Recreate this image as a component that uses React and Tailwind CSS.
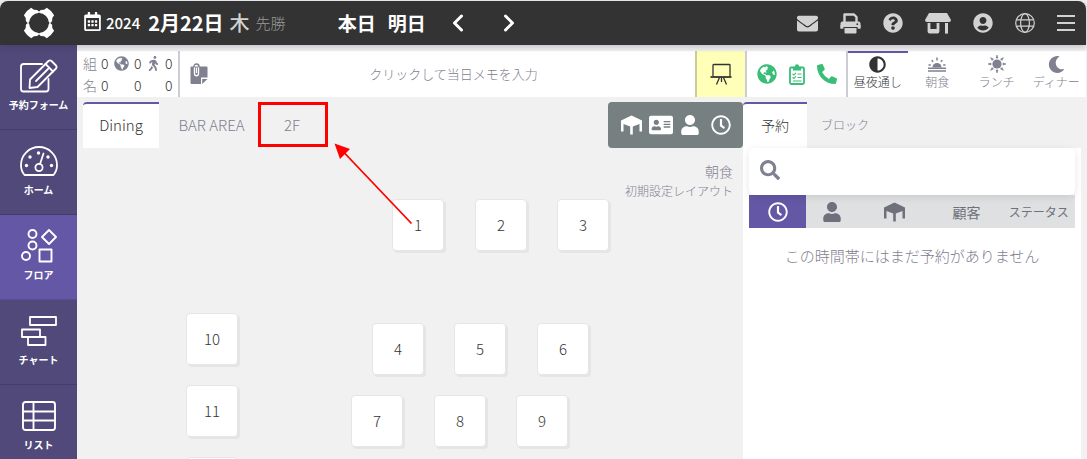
import React from "react";
import {
  FaRegCalendarAlt,
  FaEnvelope,
  FaQuestionCircle,
  FaUserCircle,
  FaGlobeAmericas,
  FaWalking,
  FaAdjust,
  FaMoon,
  FaPhoneAlt,
  FaAddressCard,
  FaUser,
  FaRegClock,
  FaSearch,
} from "react-icons/fa";

const LogoIcon = () => (
  <svg viewBox="-17 -17 34 34" className="size-[34px]" fill="#fff">
    {[45, 135, 225, 315].map((a) => (
      <path key={a} transform={`rotate(${a})`} d="M-5.200 -16.200Q0 -17.600 5.200 -16.200L5.800 -13L8 -10.500L8 -7.500L-8 -7.500L-8 -10.500L-5.800 -13Z" />
    ))}
    <circle r="9.900" fill="#333" />
  </svg>
);

const PrinterIcon = () => (
  <svg viewBox="0 0 21 21" className="size-[21px]" fill="#d2d2d2">
    <path d="M4.500 9V1.500H14L16.500 4V9" fill="none" stroke="#d2d2d2" strokeWidth="2.400" strokeLinejoin="round" />
    <path d="M2.500 8.500H18.500Q20.500 8.500 20.500 10.500V15.500H.5V10.500Q.5 8.500 2.500 8.500Z" />
    <path d="M2.800 12.800H18.200V21H2.800Z" fill="#333" />
    <path d="M.5 12H20.500V15.500H17.500V14H3.500V15.500H.5Z" />
    <path d="M4.500 15H16.500V19.500Q16.500 20.500 15.500 20.500H5.500Q4.500 20.500 4.500 19.500Z" />
    <circle cx="17.300" cy="11.200" r=".9" fill="#333" />
  </svg>
);

const StoreIcon = () => (
  <svg viewBox="0 0 26 21" className="h-[21px] w-[26px]" fill="#d2d2d2">
    <path d="M4 0H22L26 7Q26 9 24 9H2Q0 9 0 7Z" />
    <path d="M2.600 10H5.400V16H11.600V10H14.400V18.600Q14.400 20.600 12.400 20.600H4.600Q2.600 20.600 2.600 18.600Z" />
    <path d="M20 10H23V20.600H20Z" />
  </svg>
);

const GlobeIcon = () => (
  <svg viewBox="0 0 20 20" className="size-5" fill="none" stroke="#d2d2d2" strokeWidth="1.2">
    <circle cx="10" cy="10" r="9.3" />
    <ellipse cx="10" cy="10" rx="4.4" ry="9.3" />
    <path d="M1.4 6.8H18.6M1.4 13.2H18.6" />
  </svg>
);

const MenuIcon = () => (
  <svg viewBox="0 0 18 16" className="h-4 w-[18px]" stroke="#d2d2d2" strokeWidth="2">
    <path d="M0 1H18M0 8H18M0 15H18" />
  </svg>
);

const Chevron = ({ d }) => (
  <svg viewBox="0 0 12 18" className="h-[18px] w-3" fill="none" stroke="#fff" strokeWidth="3" strokeLinecap="round" strokeLinejoin="round">
    <path d={d} />
  </svg>
);

const EditIcon = () => (
  <svg viewBox="0 0 38 34" className="h-[34px] w-[38px]" fill="none" stroke="#fff" strokeWidth="1.8" strokeLinejoin="round" strokeLinecap="round">
    <path d="M22 5H3.5Q1 5 1 7.500V30Q1 32.500 3.500 32.500H26Q28.500 32.500 28.500 30V20" />
    <path d="M10 20.500L28.500 2Q30 .8 31.500 2L36 6.500Q37.200 8 36 9.500L17.500 28L9.500 29Z" />
    <path d="M25.500 5L33 12.500M28 10L16 22" />
  </svg>
);

const GaugeIcon = () => (
  <svg viewBox="0 0 38 30" className="h-[30px] w-[38px]" fill="none" stroke="#fff" strokeWidth="1.8" strokeLinejoin="round" strokeLinecap="round">
    <path d="M4.500 29Q1 25 1 19A18 18 0 0 1 37 19Q37 25 33.500 29Z" />
    <circle cx="19" cy="21.500" r="3.600" />
    <path d="M20 18L23.500 7.500" />
    <g fill="#fff" stroke="none">
      <circle cx="6.500" cy="19.500" r="1.700" />
      <circle cx="10" cy="11" r="1.700" />
      <circle cx="18.500" cy="7" r="1.700" />
      <circle cx="28" cy="11" r="1.700" />
      <circle cx="31.500" cy="19.500" r="1.700" />
    </g>
  </svg>
);

const FloorIcon = () => (
  <svg viewBox="0 0 36 34" className="h-[34px] w-9" fill="none" stroke="#fff" strokeWidth="1.9" strokeLinejoin="round">
    <circle cx="11.500" cy="5" r="4" />
    <circle cx="11.500" cy="16.500" r="4" />
    <circle cx="5" cy="27" r="4" />
    <path d="M28 1L35 8L28 15L21 8Z" />
    <rect x="18.500" y="20.500" width="12" height="12" />
  </svg>
);

const ChartIcon = () => (
  <svg viewBox="0 0 36 30" className="h-[30px] w-9" fill="none" stroke="#fff" strokeWidth="1.8" strokeLinejoin="round">
    <rect x="9" y="1" width="26" height="8" />
    <rect x="1" y="13.500" width="18" height="7.500" />
    <rect x="7" y="21" width="17.500" height="8" />
  </svg>
);

const ListIcon = () => (
  <svg viewBox="0 0 34 30" className="h-[30px] w-[34px]" fill="none" stroke="#fff" strokeWidth="1.9">
    <rect x="1" y="1" width="32" height="28" rx="2.500" />
    <path d="M1 10.500H33M1 19.500H33M11.500 1V29" />
  </svg>
);

const TableIcon = () => (
  <svg viewBox="0 0 21 20" className="h-5 w-[21px]" fill="currentColor">
    <path d="M10.500 .5L21 5.500V16.500H18.500V9L11.800 11.500V19.500H9.200V11.500L2.500 9V16.500H0V5.500Z" />
  </svg>
);

const NoteClipIcon = () => (
  <svg viewBox="0 0 18 22" className="h-[22px] w-[18px]">
    <path d="M1.500 3.500H16.500Q17.500 3.500 17.500 4.500V14.500H11V21H1.500Q.5 21 .5 20V4.500Q.5 3.500 1.500 3.500Z" fill="#7f8090" />
    <path d="M12.200 16H17.500L12.200 21Z" fill="#7f8090" />
    <path d="M4.500 4V10.500Q4.500 12.800 6.500 12.800T8.500 10.500V4" fill="none" stroke="#fff" strokeWidth="1.400" />
    <path d="M4 4.500V3.500Q4 1 6.500 1T9 3.500V4.500" fill="none" stroke="#7f8090" strokeWidth="1.400" />
    <path d="M6.500 4.500V10" stroke="#fff" strokeWidth="1" />
  </svg>
);

const EaselIcon = () => (
  <svg viewBox="0 0 22 22" className="size-[22px]" fill="none" stroke="#333" strokeWidth="1.300">
    <path d="M3 13V2.200Q3 1.500 3.700 1.500H19.300Q20 1.500 20 2.200V13" />
    <path d="M.5 14H21.500" strokeWidth="1.800" />
    <path d="M9.500 14.500L6.500 21.500M11.500 14.500V19M13.500 14.500L16.500 21.500" />
  </svg>
);

const ClipboardIcon = () => (
  <svg viewBox="0 0 16 21" className="h-[21px] w-4" fill="none" stroke="#39bd77">
    <rect x="1" y="3.500" width="14" height="16.500" rx="1.200" strokeWidth="1.800" />
    <path d="M4 2.800H12V6.500H4Z" fill="#39bd77" stroke="none" />
    <circle cx="8" cy="2.300" r="2" fill="#39bd77" stroke="none" />
    <path d="M3.500 9.800L4.800 11L7 8.800M8.500 10H12.500M3.500 13.300L4.800 14.500L7 12.300M8.500 13.500H12.500M4 17H12.500" strokeWidth="1.100" />
  </svg>
);

const SunriseIcon = () => (
  <svg viewBox="0 0 18 15" className="h-[15px] w-[18px]" fill="none" stroke="#7f8090" strokeWidth="1.500">
    <path d="M4.500 10.500A4.500 4.500 0 0 1 13.500 10.500Z" fill="#7f8090" stroke="none" />
    <path d="M0 11.200H18M0 14H18M9 .5V3.500M3.600 3.200L5.200 4.800M14.400 3.200L12.800 4.800M.5 8H2.800M15.200 8H17.500" />
  </svg>
);

const SunIcon = () => (
  <svg viewBox="-9 -9 18 18" className="size-[18px]" fill="#7f8090">
    <circle r="4.600" />
    {[0, 45, 90, 135, 180, 225, 270, 315].map((a) => (
      <path key={a} transform={`rotate(${a})`} d="M-1 -6L0 -9L1 -6Z" stroke="#7f8090" strokeWidth=".6" />
    ))}
  </svg>
);

const navItems = [
  { label: "予約フォーム", icon: <EditIcon /> },
  { label: "ホーム", icon: <GaugeIcon /> },
  { label: "フロア", icon: <FloorIcon />, active: true },
  { label: "チャート", icon: <ChartIcon /> },
  { label: "リスト", icon: <ListIcon /> },
];

const shifts = [
  { label: "昼夜通し", icon: <FaAdjust className="size-[17px]" />, active: true },
  { label: "朝食", icon: <SunriseIcon /> },
  { label: "ランチ", icon: <SunIcon /> },
  { label: "ディナー", icon: <FaMoon className="size-[17px]" /> },
];

const tables = [
  { n: 1, place: "left-[315px] top-[51px]" },
  { n: 2, place: "left-[398px] top-[51px]" },
  { n: 3, place: "left-[480px] top-[51px]" },
  { n: 4, place: "left-[295px] top-[175px]" },
  { n: 5, place: "left-[377px] top-[175px]" },
  { n: 6, place: "left-[460px] top-[175px]" },
  { n: 7, place: "left-[274px] top-[247px]" },
  { n: 8, place: "left-[357px] top-[247px]" },
  { n: 9, place: "left-[439px] top-[247px]" },
  { n: 10, place: "left-[109px] top-[165px]" },
  { n: 11, place: "left-[109px] top-[237px]" },
  { place: "left-[109px] top-[309px]" },
];

function Header() {
  return (
    <header className="relative z-10 mt-px mr-px flex h-11 shrink-0 items-center rounded-t-lg bg-[#333] pr-[11px] text-white shadow-[0_2px_6px_rgba(40,40,70,0.25)]">
      <a href="#top" aria-label="トップ" className="flex w-[77px] justify-center">
        <LogoIcon />
      </a>
      <button className="ml-1.5 flex items-center">
        <FaRegCalendarAlt className="mb-1 size-[19px]" />
        <span className="ml-1 text-[15px] font-medium">2024</span>
        <span className="ml-2 text-xl leading-6 font-bold">2月22日</span>
        <span className="ml-1.5 text-xl leading-6 font-medium text-[#d2d2d2]">木</span>
        <span className="ml-1.5 text-[15px] text-[#999]">先勝</span>
      </button>
      <button className="ml-[52px] text-[19px] leading-6 font-bold">本日</button>
      <button className="ml-3 text-[19px] leading-6 font-bold">明日</button>
      <button aria-label="前の日" className="ml-[26px]">
        <Chevron d="M9.500 2L2.500 9L9.500 16" />
      </button>
      <button aria-label="次の日" className="ml-[39px]">
        <Chevron d="M2.500 2L9.500 9L2.500 16" />
      </button>
      <div className="ml-auto flex items-center gap-[22px] text-[#d2d2d2]">
        <button aria-label="メール"><FaEnvelope className="size-[21px]" /></button>
        <button aria-label="印刷"><PrinterIcon /></button>
        <button aria-label="ヘルプ"><FaQuestionCircle className="size-5" /></button>
        <button aria-label="店舗"><StoreIcon /></button>
        <button aria-label="アカウント"><FaUserCircle className="size-5" /></button>
        <button aria-label="言語"><GlobeIcon /></button>
        <button aria-label="メニュー"><MenuIcon /></button>
      </div>
    </header>
  );
}

function Toolbar() {
  return (
    <div className="mt-1.5 mr-px flex h-[46px] shrink-0 bg-white">
      <div className="grid w-[103px] shrink-0 grid-cols-[14px_9px_16px_9px_14px_9px] content-center items-center gap-x-1 border-r-2 border-[#ccccd4] pl-1.5 text-sm leading-[22px] text-[#333]">
        <span className="text-[#7f8090]">組</span>
        <span>0</span>
        <FaGlobeAmericas className="size-[15px] text-[#7f8090]" />
        <span>0</span>
        <FaWalking className="size-[15px] justify-self-end text-[#7f8090]" />
        <span>0</span>
        <span className="text-[#7f8090]">名</span>
        <span>0</span>
        <span className="col-start-4">0</span>
        <span className="col-start-6">0</span>
      </div>
      <button className="relative flex flex-1 items-center justify-center text-[13px] text-[#7f8090]">
        <span className="absolute left-2.5"><NoteClipIcon /></span>
        <span className="pl-8">クリックして当日メモを入力</span>
      </button>
      <button aria-label="ボード" className="flex w-[52px] items-center justify-center border-r-2 border-l-2 border-r-[#ccccd4] border-l-[#cccb9c] bg-[#ffffb8]">
        <EaselIcon />
      </button>
      <div className="flex w-[101px] items-center justify-center gap-3 border-r-2 border-[#ccccd4] text-[#39bd77]">
        <button aria-label="ウェブ予約"><FaGlobeAmericas className="size-5" /></button>
        <button aria-label="リクエスト"><ClipboardIcon /></button>
        <button aria-label="電話"><FaPhoneAlt className="size-5" /></button>
      </div>
      <div className="grid w-[238px] grid-cols-4">
        {shifts.map((s) => (
          <button
            key={s.label}
            className={
              s.active
                ? "flex flex-col items-center border-t-2 border-[#6457a6] pt-0.5 text-[12px] leading-[18px] text-[#333]"
                : "flex flex-col items-center border-t-2 border-transparent pt-0.5 text-[12px] leading-[18px] text-[#7f8090]"
            }
          >
            <span className="flex h-[18px] items-center">{s.icon}</span>
            {s.label}
          </button>
        ))}
      </div>
    </div>
  );
}

function Floor() {
  return (
    <section className="relative min-w-0 flex-1">
      <div className="flex h-[46px] pl-1.5 text-[15px] text-[#7f8090]">
        <button className="w-[76px] rounded-tl border-t-2 border-[#6457a6] bg-white pb-0.5 text-[#333]">Dining</button>
        <button className="w-[105px] border-t-2 border-transparent pb-0.5">BAR AREA</button>
        <button className="w-14 border-t-2 border-transparent pb-0.5">2F</button>
        <div className="ml-auto flex w-[135px] items-center justify-center gap-[7px] rounded bg-[#768080] text-white">
          <button aria-label="テーブル"><TableIcon /></button>
          <button aria-label="顧客カード"><FaAddressCard className="size-6" /></button>
          <button aria-label="人数" className="mr-1"><FaUser className="size-5" /></button>
          <button aria-label="時刻"><FaRegClock className="size-5" /></button>
        </div>
      </div>
      <div className="relative">
        <p className="pt-3.5 pr-2.5 text-right text-sm leading-[19px] text-[#7f8090]">
          朝食
          <br />
          <span className="text-[12px]">初期設定レイアウト</span>
        </p>
        {tables.map((t) => (
          <button
            key={t.place}
            className={`absolute size-[52px] rounded-sm border border-[#e6e6e6] bg-white text-[15px] text-[#333] shadow-[2px_2px_0_#e5e5e5] ${t.place}`}
          >
            {t.n}
          </button>
        ))}
      </div>
      <div className="pointer-events-none absolute top-0 left-[181px] h-[45px] w-[70px] border-[3px] border-[#fe0000]" />
      <svg viewBox="0 0 80 82" className="pointer-events-none absolute top-[41px] left-[257px] h-[82px] w-20">
        <path d="M77.500 80.500L10 9.500" stroke="#fe0000" strokeWidth="1.800" />
        <path d="M0.500 .5L16 6L6 16Z" fill="#fe0000" />
      </svg>
    </section>
  );
}

function Reservations() {
  return (
    <aside className="flex w-[344px] shrink-0 flex-col pr-1.5">
      <div className="flex h-[46px] text-sm text-[#7f8090]">
        <button className="w-16 rounded-tl border-t-2 border-[#6457a6] bg-white pb-0.5 text-[#333]">予約</button>
        <button className="w-[76px] border-t-2 border-transparent pb-0.5 text-[12px]">ブロック</button>
      </div>
      <div className="flex-1 bg-white px-1.5">
        <label className="relative flex h-[47px] items-center rounded-md bg-white px-[11px] shadow-[0_2px_8px_rgba(0,0,0,0.1)]">
          <FaSearch className="mb-1 size-5 text-[#7f8090]" />
          <input type="search" aria-label="検索" className="ml-2 min-w-0 flex-1 bg-transparent outline-none" />
        </label>
        <table className="w-full table-fixed text-[#6e717c]">
          <thead>
            <tr className="h-[33px] bg-[#dfe0e2]">
              <th className="w-[57px] bg-[#6457a6] p-0 text-white">
                <button aria-label="時刻順" className="flex w-full justify-center"><FaRegClock className="size-5" /></button>
              </th>
              <th className="w-[52px] p-0">
                <button aria-label="人数順" className="flex w-full justify-center"><FaUser className="size-5" /></button>
              </th>
              <th className="p-0">
                <button aria-label="テーブル順" className="flex w-full justify-center"><TableIcon /></button>
              </th>
              <th className="p-0 text-sm font-normal">顧客</th>
              <th className="p-0 text-[12px] font-normal">ステータス</th>
            </tr>
          </thead>
          <tbody>
            <tr>
              <td colSpan={5} className="pt-4 text-center text-[15px] leading-6 text-[#7f8090]">この時間帯にはまだ予約がありません</td>
            </tr>
          </tbody>
        </table>
      </div>
    </aside>
  );
}

export default function App() {
  return (
    <div className="flex h-screen flex-col overflow-hidden bg-[#f1f1f2] font-['Noto_Sans_CJK_JP',sans-serif] font-light">
      <Header />
      <div className="flex min-h-0 flex-1">
        <nav className="w-[77px] shrink-0 bg-[#50497a]">
          {navItems.map((item) => (
            <a
              key={item.label}
              href="#nav"
              className={
                item.active
                  ? "flex h-[85px] flex-col items-center border-b border-[#5a4f96] bg-[#6457a6] pt-3.5 text-[10px] leading-4 font-bold text-white"
                  : "flex h-[85px] flex-col items-center border-b border-[#433d68] pt-3.5 text-[10px] leading-4 font-bold text-white"
              }
            >
              <span className="mb-1 flex h-[34px] items-center">{item.icon}</span>
              {item.label}
            </a>
          ))}
        </nav>
        <div className="flex min-w-0 flex-1 flex-col">
          <Toolbar />
          <main className="mt-[5px] flex min-h-0 flex-1">
            <Floor />
            <Reservations />
          </main>
        </div>
      </div>
    </div>
  );
}
